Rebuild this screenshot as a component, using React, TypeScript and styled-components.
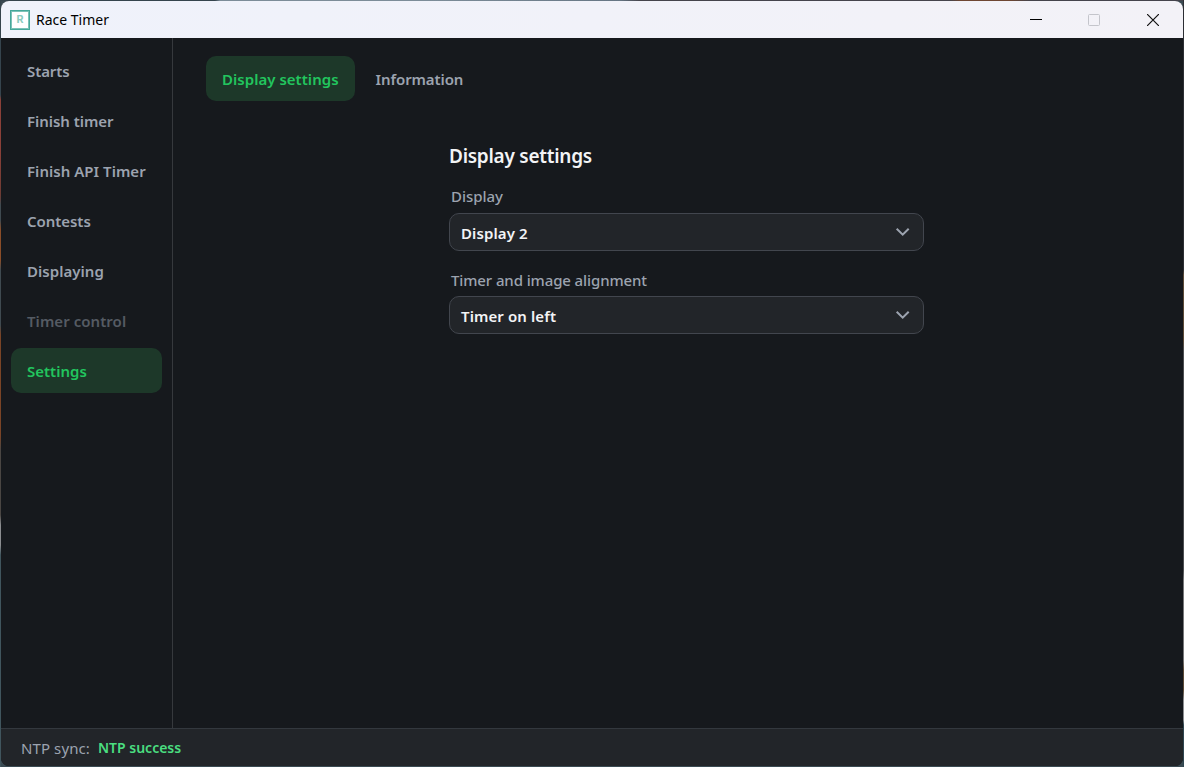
import React from 'react';
import styled, { createGlobalStyle } from 'styled-components';

const GlobalStyle = createGlobalStyle`
  * { box-sizing: border-box; }
  body { margin: 0; background: #3b4a52; overflow: hidden; }
  button { font: inherit; border: 0; background: none; padding: 0; color: inherit; }
`;

const Desktop = styled.div`
  width: 1184px;
  height: 767px;
  padding: 1px;
  background:
    linear-gradient(to bottom, #35444d 0 95px, #8a4038 100px 150px, #6d3b33 195px, #3f4a50 205px 220px, #8a4d28 230px 260px, #3f4a50 270px 325px, #7a4426 335px 435px, #4a4643 450px 515px, #8b8d90 525px 545px, #40555d 555px) left / 1px 100% no-repeat,
    linear-gradient(to bottom, #2c2e33 0 270px, #5c4b38 275px 340px, #4d4f52 350px 570px, #77787a 580px 660px, #5c4b38 670px 690px, #8b8d90 700px 720px, #2f4650 725px) right / 1px 100% no-repeat,
    linear-gradient(to right, #35444d 0 215px, #7c8c98 220px 430px, #667684 620px, #45444c 640px 950px, #6e4632 960px 1010px, #45444c 1030px) top / 100% 1px no-repeat,
    #3a4a52;
  font-family: 'Noto Sans', 'Open Sans', sans-serif;
`;

const Window = styled.div`
  width: 1182px;
  height: 765px;
  display: flex;
  flex-direction: column;
  overflow: hidden;
  border-radius: 8px;
  background: #16191d;
`;

const TitleBar = styled.header`
  height: 37px;
  flex: none;
  display: flex;
  align-items: center;
  padding: 0 1px 0 9px;
  background: linear-gradient(to right, #eff2fb, #f3f2f7);
`;

const AppIcon = styled.div`
  width: 20px;
  height: 20px;
  border: 1px solid #45a89a;
  box-shadow: inset 0 0 0 1px #7cc2b8;
  background: #fff;
  color: #8accc0;
  font: bold 11px/18px 'Roboto', sans-serif;
  text-align: center;
`;

const Label = styled.span<{ $spacing?: number }>`
  letter-spacing: ${(p) => p.$spacing ?? 0}px;
  white-space: pre;
`;

const Title = styled.div`
  margin-left: 6px;
  flex: 1;
  font-size: 14px;
  line-height: 20px;
  color: #000;
`;

const WindowButton = styled.button`
  width: 58.5px;
  height: 37px;
  display: flex;
  align-items: center;
  justify-content: center;
`;

const Body = styled.div`
  flex: 1;
  display: flex;
  min-height: 0;
`;

const Sidebar = styled.nav`
  width: 172px;
  flex: none;
  display: flex;
  flex-direction: column;
  gap: 5px;
  padding: 10px;
  border-right: 1px solid #36393d;
`;

const Tab = styled.button<{ $active?: boolean; $disabled?: boolean }>`
  height: 45px;
  flex: none;
  padding: 0 16px;
  border-radius: 10px;
  text-align: left;
  font-size: 15px;
  font-weight: 600;
  line-height: 20px;
  background: ${(p) => (p.$active ? '#1d3829' : 'transparent')};
  color: ${(p) => (p.$active ? '#22c55e' : p.$disabled ? '#555b63' : '#9ca3af')};
`;

const Content = styled.main`
  flex: 1;
  padding: 18px 33px;
`;

const Tabs = styled.div`
  display: flex;
  gap: 5px;
`;

const Panel = styled.section`
  width: 475px;
  margin: 40px auto 0 243px;
`;

const Heading = styled.h1`
  margin: 0;
  font-size: 19px;
  font-weight: 600;
  line-height: 30px;
  color: #f3f4f6;
`;

const Field = styled.div`
  padding-top: 14px;
  & + & { padding-top: 18px; }
`;

const FieldLabel = styled.div<{ $height: number }>`
  padding-left: 2px;
  height: ${(p) => p.$height}px;
  font-size: 15px;
  font-weight: 500;
  line-height: 23px;
  color: #9ca3af;
`;

const Select = styled.button`
  width: 475px;
  height: 38px;
  display: flex;
  align-items: center;
  justify-content: space-between;
  padding: 1px 12px 0 11px;
  border: 1px solid #42464e;
  border-radius: 10px;
  background: #222529;
  color: #f3f4f6;
  font-size: 15px;
  font-weight: 600;
`;

const StatusBar = styled.footer`
  height: 38px;
  flex: none;
  display: flex;
  align-items: center;
  gap: 8px;
  padding-left: 20px;
  border-top: 1px solid #33383e;
  background: #222529;
  font-size: 15px;
  color: #9ca3af;
`;

const Success = styled.strong`
  font-weight: 600;
  font-size: 14px;
  color: #4ade80;
`;

const Chevron = () => (
  <svg width="16" height="16" viewBox="0 0 16 16" fill="none" stroke="#9ca3af" strokeWidth="2">
    <path d="M1.7 3.7l6 6 6-6" />
  </svg>
);

const items = [
  { text: 'Starts', spacing: -0.1 },
  { text: 'Finish timer', spacing: -0.05 },
  { text: 'Finish API Timer', spacing: 0.03 },
  { text: 'Contests', spacing: -0.05 },
  { text: 'Displaying', spacing: 0.04 },
  { text: 'Timer control', spacing: 0.05, disabled: true },
  { text: 'Settings', spacing: 0, active: true },
];

export default function App() {
  return (
    <Desktop>
      <GlobalStyle />
      <Window>
        <TitleBar>
          <AppIcon>R</AppIcon>
          <Title><Label>Race Timer</Label></Title>
          <WindowButton aria-label="Minimize">
            <svg width="12" height="12"><path d="M0 5.5h12" stroke="#000" /></svg>
          </WindowButton>
          <WindowButton aria-label="Maximize">
            <svg width="12" height="12"><rect x=".5" y=".5" width="11" height="11" rx="1" fill="none" stroke="#c4c5cb" /></svg>
          </WindowButton>
          <WindowButton aria-label="Close">
            <svg width="12" height="12"><path d="M0 0l12 12M12 0L0 12" stroke="#111" strokeWidth="1.2" /></svg>
          </WindowButton>
        </TitleBar>
        <Body>
          <Sidebar>
            {items.map((i) => (
              <Tab key={i.text} $active={i.active} $disabled={i.disabled}>
                <Label $spacing={i.spacing}>{i.text}</Label>
              </Tab>
            ))}
          </Sidebar>
          <Content>
            <Tabs>
              <Tab $active><Label $spacing={0.03}>Display settings</Label></Tab>
              <Tab><Label $spacing={-0.1}>Information</Label></Tab>
            </Tabs>
            <Panel>
              <Heading><Label $spacing={-0.26}>Display settings</Label></Heading>
              <Field>
                <FieldLabel $height={28}><Label $spacing={-0.05}>Display</Label></FieldLabel>
                <Select><Label $spacing={0.12}>Display 2</Label><Chevron /></Select>
              </Field>
              <Field>
                <FieldLabel $height={27}><Label $spacing={-0.11}>Timer and image alignment</Label></FieldLabel>
                <Select><Label $spacing={0.1}>Timer on left</Label><Chevron /></Select>
              </Field>
            </Panel>
          </Content>
        </Body>
        <StatusBar>
          <Label $spacing={0.1}>NTP sync:</Label>
          <Success><Label>NTP success</Label></Success>
        </StatusBar>
      </Window>
    </Desktop>
  );
}
